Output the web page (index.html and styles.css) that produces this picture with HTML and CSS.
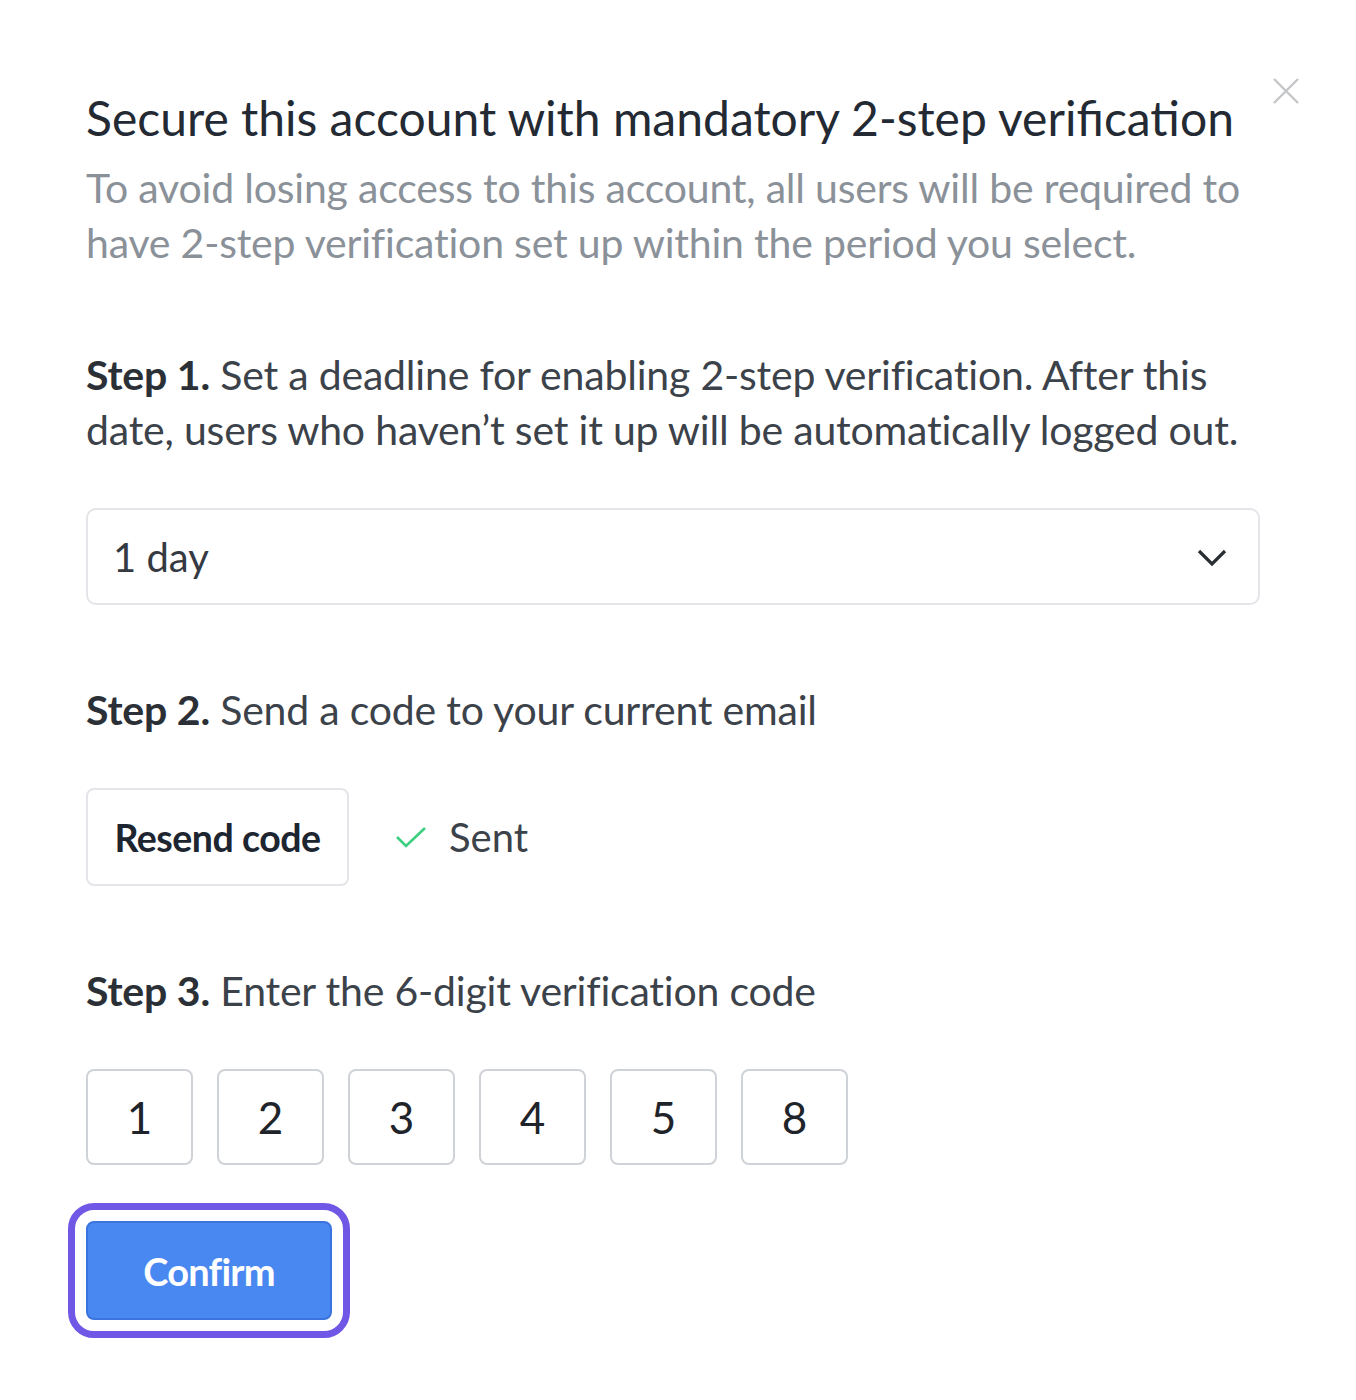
FILE: index.html
```html
<!DOCTYPE html>
<html lang="en">

<head>
    <meta charset="UTF-8">
    <meta name="viewport" content="width=device-width, initial-scale=1.0">
    <title>2-step verification</title>
    <link rel="stylesheet" href="styles.css">
</head>

<body>
    <div class="modal">
        <button class="close-button" aria-label="Close">
            <svg width="28" height="28" viewBox="0 0 28 28">
                <path d="M2 2 L26 26 M26 2 L2 26" stroke="#c3c5c8" stroke-width="2.4" fill="none" />
            </svg>
        </button>

        <div class="intro">
            <h1 class="title">Secure this account with mandatory 2-step verification</h1>
            <p class="subtitle">To avoid losing access to this account, all users will be required to<br>have 2-step verification set up within the period you select.</p>
        </div>

        <div class="step">
            <p class="step-text"><b>Step 1.</b> Set a deadline for enabling 2-step verification. After this<br>date, users who haven’t set it up will be automatically logged out.</p>
            <div class="select">
                <span>1 day</span>
                <svg width="32" height="22" viewBox="0 0 32 22">
                    <path d="M3 5 L16 18 L29 5" stroke="#2a2f36" stroke-width="3.2" fill="none" />
                </svg>
            </div>
        </div>

        <div class="step">
            <p class="step-text"><b>Step 2.</b> Send a code to your current email</p>
            <div class="send-row">
                <button class="resend-button">Resend code</button>
                <span class="sent">
                    <svg width="32" height="22" viewBox="0 0 32 22">
                        <path d="M2 11 L11 20 L30 2" stroke="#3ccf80" stroke-width="2.6" fill="none" />
                    </svg>
                    Sent
                </span>
            </div>
        </div>

        <div class="step">
            <p class="step-text"><b>Step 3.</b> Enter the 6-digit verification code</p>
            <div class="code-row">
                <div class="code-box">1</div>
                <div class="code-box">2</div>
                <div class="code-box">3</div>
                <div class="code-box">4</div>
                <div class="code-box">5</div>
                <div class="code-box">8</div>
            </div>
        </div>

        <div class="actions">
            <button class="confirm-button">Confirm</button>
        </div>
    </div>
</body>

</html>
```

FILE: styles.css
```css
:root {
    --text-dark: #242a33;
    --text-body: #3c424a;
    --text-muted: #8b9199;
    --border-light: #e3e5e8;
    --border-code: #cfd2d6;
    --blue: #4a88f1;
    --focus: #7157e6;
}

body {
    margin: 0;
    background-color: #fff;
    font-family: Lato, "Open Sans", sans-serif;
    color: var(--text-body);
}

.modal {
    position: relative;
    width: 1174px;
    padding: 90px 0 60px 86px;
    display: flex;
    flex-direction: column;
    gap: 77px;
}

.close-button {
    position: absolute;
    top: 77px;
    left: 1272px;
    padding: 0;
    border: none;
    background: none;
}

.intro {
    display: flex;
    flex-direction: column;
    gap: 14px;
}

.title {
    margin: 0;
    font-size: 48px;
    line-height: 56px;
    font-weight: 400;
    color: var(--text-dark);
}

.subtitle {
    margin: 0;
    font-size: 41px;
    line-height: 55px;
    letter-spacing: -0.2px;
    color: var(--text-muted);
}

.step {
    display: flex;
    flex-direction: column;
    gap: 51px;
}

.step-text {
    margin: 0;
    font-size: 41px;
    line-height: 55px;
    letter-spacing: -0.2px;
    color: var(--text-body);
}

.step-text b {
    color: #2b3037;
}

.select {
    height: 97px;
    box-sizing: border-box;
    border: 2px solid var(--border-light);
    border-radius: 10px;
    display: flex;
    align-items: center;
    justify-content: space-between;
    padding: 0 30px 0 25px;
    font-size: 40px;
    color: #353a42;
}

.send-row {
    display: flex;
    align-items: center;
    gap: 46px;
}

.resend-button {
    width: 263px;
    height: 98px;
    border: 2px solid var(--border-light);
    border-radius: 8px;
    background: #fff;
    font-family: inherit;
    font-size: 37.5px;
    font-weight: 700;
    letter-spacing: -0.5px;
    color: #1d2530;
}

.sent {
    display: flex;
    align-items: center;
    gap: 22px;
    font-size: 40px;
    color: var(--text-body);
}

.code-row {
    display: flex;
    gap: 24px;
}

.code-box {
    width: 107px;
    height: 96px;
    box-sizing: border-box;
    border: 2px solid var(--border-code);
    border-radius: 8px;
    display: flex;
    align-items: center;
    justify-content: center;
    font-size: 44px;
    color: #1f242b;
}

.actions {
    margin-top: -21px;
}

.confirm-button {
    width: 246px;
    height: 99px;
    border: 2px solid #3b74de;
    border-radius: 8px;
    background-color: var(--blue);
    color: #fff;
    font-family: inherit;
    font-size: 38px;
    font-weight: 700;
    letter-spacing: -0.8px;
    outline: 7px solid var(--focus);
    outline-offset: 11px;
}
```
